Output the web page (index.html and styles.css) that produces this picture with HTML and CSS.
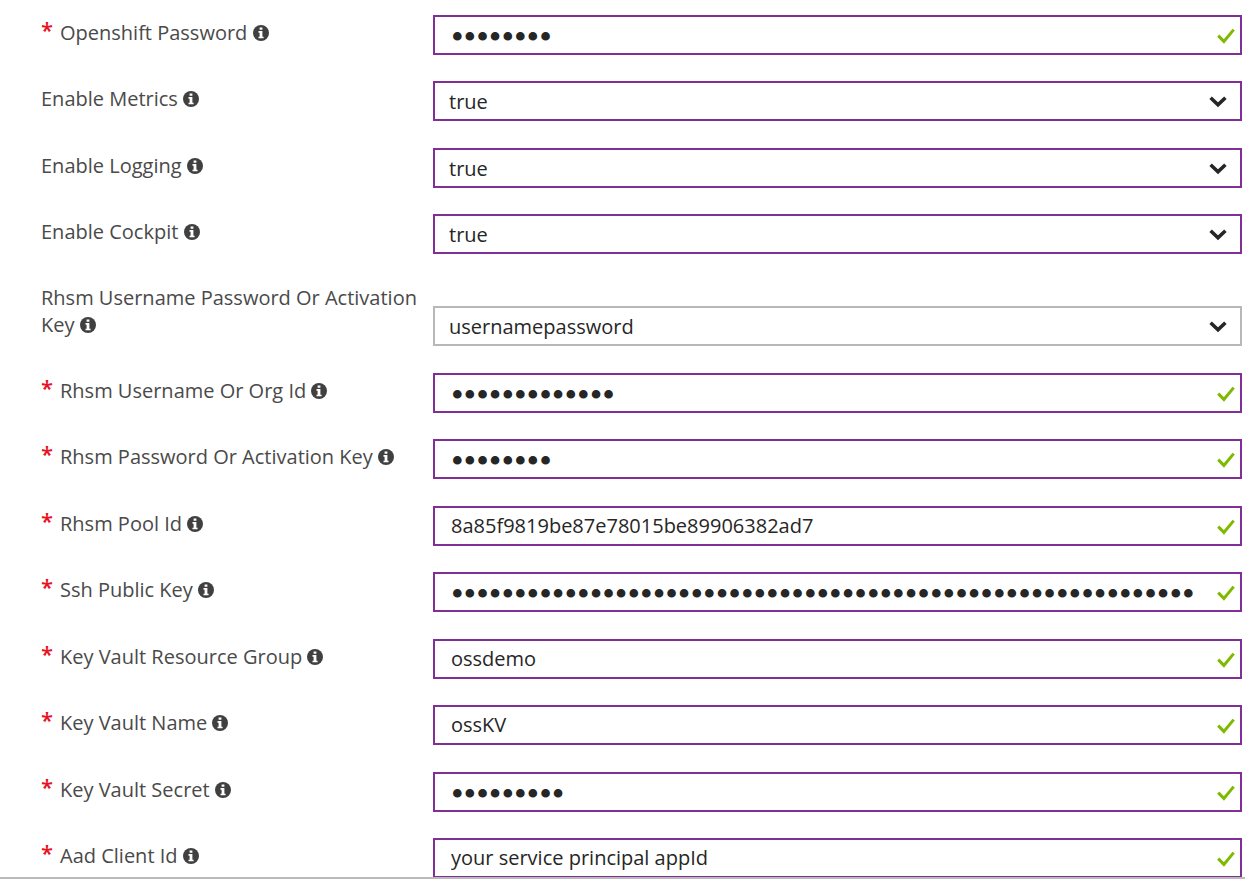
FILE: index.html
```html
<!DOCTYPE html>
<html lang="en">
<head>
<meta charset="utf-8">
<title>Template parameters</title>
<link rel="stylesheet" href="styles.css">
</head>
<body>
<svg class="sprite" aria-hidden="true">
  <symbol id="info" viewBox="0 0 16 16"><circle cx="8" cy="8" r="8" fill="#404040"/><path d="M6.6 2.5h2.8v2.3H6.6zM5.5 6.1h3.9v5.6h1.2v1.6H5.5v-1.6h1.1V7.7H5.5z" fill="#fff"/></symbol>
  <symbol id="check" viewBox="0 0 18 16"><path d="M1.2 7.6 6.9 13.4 16.7 1.6" fill="none" stroke="#7fba00" stroke-width="3"/></symbol>
  <symbol id="chevron" viewBox="0 0 18 12"><path d="M1.6 1.8 9 8.8 16.4 1.8" fill="none" stroke="#262626" stroke-width="3.6"/></symbol>
</svg>
<form class="panel">
  <div class="row">
    <label class="label required" for="f1"><span>Openshift Password <svg class="info"><use href="#info"/></svg></span></label>
    <div class="field"><input class="control secret" id="f1" type="password" value="12345678"><svg class="check"><use href="#check"/></svg></div>
  </div>
  <div class="row">
    <label class="label" for="f2"><span>Enable Metrics <svg class="info"><use href="#info"/></svg></span></label>
    <div class="field"><select class="control choice" id="f2"><option>true</option><option>false</option></select><svg class="chevron"><use href="#chevron"/></svg></div>
  </div>
  <div class="row">
    <label class="label" for="f3"><span>Enable Logging <svg class="info"><use href="#info"/></svg></span></label>
    <div class="field"><select class="control choice" id="f3"><option>true</option><option>false</option></select><svg class="chevron"><use href="#chevron"/></svg></div>
  </div>
  <div class="row">
    <label class="label" for="f4"><span>Enable Cockpit <svg class="info"><use href="#info"/></svg></span></label>
    <div class="field"><select class="control choice" id="f4"><option>true</option><option>false</option></select><svg class="chevron"><use href="#chevron"/></svg></div>
  </div>
  <div class="row tall">
    <label class="label" for="f5"><span>Rhsm Username Password Or Activation Key <svg class="info"><use href="#info"/></svg></span></label>
    <div class="field"><select class="control choice default" id="f5"><option>usernamepassword</option><option>activationkey</option></select><svg class="chevron"><use href="#chevron"/></svg></div>
  </div>
  <div class="row">
    <label class="label required" for="f6"><span>Rhsm Username Or Org Id <svg class="info"><use href="#info"/></svg></span></label>
    <div class="field"><input class="control secret" id="f6" type="password" value="1234567890123"><svg class="check"><use href="#check"/></svg></div>
  </div>
  <div class="row">
    <label class="label required" for="f7"><span>Rhsm Password Or Activation Key <svg class="info"><use href="#info"/></svg></span></label>
    <div class="field"><input class="control secret" id="f7" type="password" value="12345678"><svg class="check"><use href="#check"/></svg></div>
  </div>
  <div class="row">
    <label class="label required" for="f8"><span>Rhsm Pool Id <svg class="info"><use href="#info"/></svg></span></label>
    <div class="field"><input class="control" id="f8" type="text" value="8a85f9819be87e78015be89906382ad7"><svg class="check"><use href="#check"/></svg></div>
  </div>
  <div class="row">
    <label class="label required" for="f9"><span>Ssh Public Key <svg class="info"><use href="#info"/></svg></span></label>
    <div class="field"><input class="control secret" id="f9" type="password" value="12345678901234567890123456789012345678901234567890123456789"><svg class="check"><use href="#check"/></svg></div>
  </div>
  <div class="row">
    <label class="label required" for="f10"><span>Key Vault Resource Group <svg class="info"><use href="#info"/></svg></span></label>
    <div class="field"><input class="control" id="f10" type="text" value="ossdemo"><svg class="check"><use href="#check"/></svg></div>
  </div>
  <div class="row">
    <label class="label required" for="f11"><span>Key Vault Name <svg class="info"><use href="#info"/></svg></span></label>
    <div class="field"><input class="control" id="f11" type="text" value="ossKV"><svg class="check"><use href="#check"/></svg></div>
  </div>
  <div class="row">
    <label class="label required" for="f12"><span>Key Vault Secret <svg class="info"><use href="#info"/></svg></span></label>
    <div class="field"><input class="control secret" id="f12" type="password" value="123456789"><svg class="check"><use href="#check"/></svg></div>
  </div>
  <div class="row">
    <label class="label required" for="f13"><span>Aad Client Id <svg class="info"><use href="#info"/></svg></span></label>
    <div class="field"><input class="control" id="f13" type="text" value="your service principal appId"><svg class="check"><use href="#check"/></svg></div>
  </div>
</form>
</body>
</html>
```
FILE: styles.css
```css
* { box-sizing: border-box; }
body { margin: 0; background: #fff; font-family: "Open Sans", "Noto Sans", sans-serif; font-size: 20px; line-height: 27px; color: #4a4a4a; }
.sprite { position: absolute; width: 0; height: 0; }
.panel { height: 100vh; overflow: auto; scrollbar-width: none; padding: 15px 3px 0 41px; border-bottom: 2px solid #bababa; }
.row { display: grid; grid-template-columns: 392px 1fr; align-items: start; margin-bottom: 26px; }
.row:nth-child(2), .row:nth-child(5), .row:nth-child(7), .row:nth-child(9), .row:nth-child(11) { margin-bottom: 27px; }
.tall .field { margin-top: 26px; }
.label { display: flex; padding-top: 4px; padding-right: 8px; }
.required::before { content: "*"; flex: none; width: 19px; color: #e81123; font-size: 22px; font-weight: 600; line-height: 20px; }
.info { width: 16px; height: 16px; vertical-align: -1px; }
.field { position: relative; }
.control { display: block; width: 100%; height: 40px; margin: 0; padding: 0 40px 2px 16px; border: 2px solid #7f2f95; border-radius: 0; background: #fff; color: #262626; font: inherit; outline: 0; appearance: none; }
.choice { padding-left: 14px; padding-bottom: 0; }
.default { border-color: #b8b8b8; }
.secret { padding-top: 4px; padding-bottom: 0; font-family: "Liberation Serif", serif; font-size: 36px; }
.check { position: absolute; right: 7px; top: 13px; width: 18px; height: 16px; }
.chevron { position: absolute; right: 15px; top: 15px; width: 18px; height: 12px; pointer-events: none; }
```
